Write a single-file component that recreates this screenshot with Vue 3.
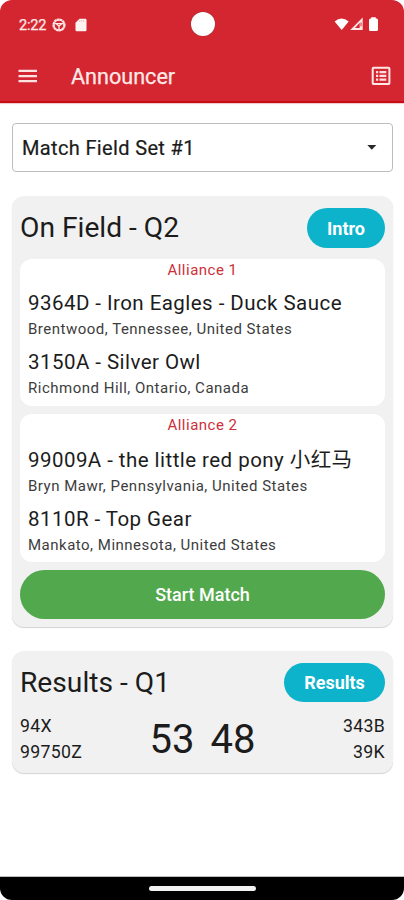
<script setup>
const alliances = [
  {
    name: 'Alliance 1',
    teams: [
      { title: '9364D - Iron Eagles - Duck Sauce', place: 'Brentwood, Tennessee, United States' },
      { title: '3150A - Silver Owl', place: 'Richmond Hill, Ontario, Canada' },
    ],
  },
  {
    name: 'Alliance 2',
    teams: [
      { title: '99009A - the little red pony 小红马', place: 'Bryn Mawr, Pennsylvania, United States' },
      { title: '8110R - Top Gear', place: 'Mankato, Minnesota, United States' },
    ],
  },
]
</script>

<template>
  <div class="phone">
    <header class="top">
      <div class="status">
        <span class="clock">2:22</span>
        <svg class="wheel" viewBox="0 0 14 14" width="14" height="14">
          <circle cx="7" cy="7" r="5.6" fill="none" stroke="#ffe9e7" stroke-width="2" stroke-dasharray="2.6 0.35" />
          <circle cx="7" cy="7" r="4.9" fill="none" stroke="#ffe9e7" stroke-width="1" />
          <path d="M3 5.7h8M4.3 5.8 7 8.2l2.700-2.400M7 8v4" fill="none" stroke="#ffe9e7" stroke-width="1.3" />
        </svg>
        <svg class="sd" viewBox="0 0 12 14" width="12" height="14">
          <path d="M4.5 .7H10.300q1.200 0 1.200 1.200v10.200q0 1.200-1.200 1.200H1.700Q.5 13.300 .5 12.100V4.700z" fill="#fff3f1" />
          <path d="M4.700 2v2M6.700 2v2M8.700 2v2" stroke="#efb0b0" stroke-width=".7" />
        </svg>
        <span class="camera"></span>
        <svg class="signals" viewBox="0 0 46 16" width="46" height="16">
          <path d="M.6 4.500Q7.500-1.600 14.700 4.500L7.700 13z" fill="#fff" />
          <path d="M28.700 .5V13H16.200z" fill="#ffe9e7" />
          <path d="M25.700 5.700v5.300H21z" fill="#d42630" />
          <path d="M27 5.500v3.800" stroke="#d42630" stroke-width="1" />
          <path d="M37.200 .3h4.600v1.200h.7q1.500 0 1.500 1.500v9.400q0 1.500-1.500 1.500h-6q-1.500 0-1.500-1.500V3q0-1.500 1.500-1.500h.7z" fill="#fff" />
        </svg>
      </div>
      <div class="appbar">
        <svg class="menu" viewBox="0 0 20 14" width="20" height="14">
          <path d="M.5 1.900h18.500M.5 7.100h18.500M.5 12.200h18.500" stroke="#ffe3e1" stroke-width="2.300" />
        </svg>
        <h1>Announcer</h1>
        <svg class="list" viewBox="0 0 20 20" width="20" height="20">
          <rect x="1.700" y="1.700" width="16.700" height="16.400" rx=".8" fill="none" stroke="#ffe7e5" stroke-width="2" />
          <path d="M5 6.100h2.200M5 9.900h2.200M5 13.700h2.200M8.500 6.100h6.800M8.500 9.900h6.800M8.500 13.700h6.800" stroke="#ffe0de" stroke-width="2.300" />
        </svg>
      </div>
    </header>

    <main>
      <div class="select">
        <span>Match Field Set #1</span>
        <svg viewBox="0 0 10 5" width="10" height="5"><path d="M.3 0h9L4.800 4.700z" fill="#292929" /></svg>
      </div>

      <section class="card field">
        <div class="head">
          <h2>On Field - Q2</h2>
          <button class="pill intro">Intro</button>
        </div>
        <div v-for="(a, i) in alliances" :key="a.name" class="alliance" :class="{ second: i === 1 }">
          <h3>{{ a.name }}</h3>
          <div v-for="t in a.teams" :key="t.title" class="team">
            <p class="title">{{ t.title }}</p>
            <p class="place">{{ t.place }}</p>
          </div>
        </div>
        <button class="start">Start Match</button>
      </section>

      <section class="card results">
        <div class="head">
          <h2>Results - Q1</h2>
          <button class="pill">Results</button>
        </div>
        <div class="scores">
          <div class="side"><span>94X</span><span>99750Z</span></div>
          <div class="numbers"><span>53</span><span>48</span></div>
          <div class="side right"><span>343B</span><span>39K</span></div>
        </div>
      </section>
    </main>

    <footer><span></span></footer>
  </div>
</template>

<style>
body { background: #fff; }
</style>

<style scoped>
* { box-sizing: border-box; margin: 0; padding: 0; }
.phone {
  width: 404px; height: 900px; display: flex; flex-direction: column;
  overflow: hidden; background: #fff; color: #1c1c1c;
  font-family: Roboto, "Noto Sans CJK SC", sans-serif; font-weight: 400; white-space: nowrap;
}
.top {
  height: 103px; flex: none; background: #d42630; border-bottom: 2px solid #c70c16;
  border-radius: 12px 12px 0 0; box-shadow: 0 1px 1px #ecc6c8;
}
.status { position: relative; height: 49px; display: flex; align-items: center; padding: 1px 24px 0 19px; }
.clock { width: 27px; font-size: 14.5px; letter-spacing: -.2px; color: #ffe9e7; -webkit-text-stroke: .25px #ffe9e7; }
.wheel { margin-left: 6px; }
.sd { margin-left: 9px; }
.camera {
  position: absolute; left: 191px; top: 12px; width: 24px; height: 24px;
  border-radius: 50%; background: #fff; box-shadow: 0 0 1px #6f343c;
}
.signals { margin-left: auto; }
.appbar { height: 54px; display: flex; align-items: center; padding: 0 13px 0 18px; }
h1 { margin-left: 33px; font-size: 21.6px; font-weight: 400; color: #ffe9e7; -webkit-text-stroke: .25px #ffe9e7; }
.list { margin-left: auto; }
main { flex: 1; padding: 20px 11px 0 12px; }
.select {
  height: 49px; border: 1px solid #bdbdbd; border-radius: 4px; display: flex;
  align-items: center; justify-content: space-between; padding: 0 15px 0 9px;
  font-size: 20px; letter-spacing: .35px; -webkit-text-stroke: .2px #171717;
}
.card { background: #f1f1f1; border-radius: 12px; box-shadow: 0 1px 1px #d2d2d2; padding: 12px 8px 8px; }
.field { margin-top: 24px; height: 431px; }
.results { margin-top: 24px; height: 122px; }
.head { height: 40px; display: flex; align-items: flex-start; justify-content: space-between; }
h2 { font-size: 28.200px; font-weight: 400; line-height: 40px; }
button { border: 0; font-family: inherit; color: #fff; font-weight: 500; }
.pill { height: 39px; width: 101px; border-radius: 20px; background: #0cb3ca; font-size: 18px; font-weight: 700; }
.pill.intro { width: 78px; height: 40px; }
.results { padding-top: 11.500px; }
.alliance { background: #fff; border-radius: 12px; height: 147px; margin-top: 11px; padding: 1px 8px 0; }
.alliance.second { margin-top: 8px; height: 148px; }
h3 { text-align: center; font-weight: 400; color: #cd3039; font-size: 15px; line-height: 20px; height: 28px; letter-spacing: .5px; }
.second h3 { height: 30px; }
.team { height: 59px; }
.title { font-size: 20.5px; line-height: 30px; height: 31px; letter-spacing: .45px; }
.place { font-size: 15px; line-height: 20px; letter-spacing: .5px; color: #3d3d3d; }
.start { width: 100%; height: 49px; margin-top: 8px; border-radius: 25px; background: #52a84c; font-size: 18px; display: block; }
.scores { display: flex; justify-content: space-between; margin-top: 10.500px; }
.side { width: 100px; display: flex; flex-direction: column; font-size: 17.700px; line-height: 26px; letter-spacing: .3px; }
.right { text-align: right; }
.numbers { display: flex; gap: 16px; font-size: 40px; line-height: 54px; }
footer {
  height: 23px; flex: none; background: #000; border-radius: 0 0 12px 12px;
  display: flex; align-items: center; justify-content: center; box-shadow: 0 -1px 0 #bcbcbc;
}
footer span { width: 107px; height: 5px; border-radius: 3px; background: #f1f1f1; }
</style>
